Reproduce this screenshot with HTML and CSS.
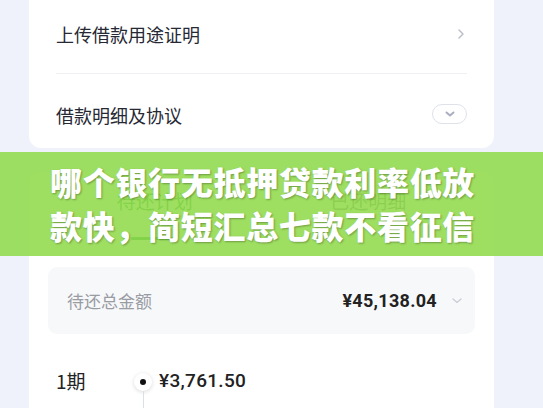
FILE: index.html
```html
<!DOCTYPE html>
<html lang="zh-CN">
<head>
  <meta charset="UTF-8">
  <meta name="viewport" content="width=device-width, initial-scale=1.0">
  <title>借款详情</title>
  <link rel="stylesheet" href="styles.css">
</head>
<body>
  <div class="page">
    <div class="card top-card">
      <div class="row">
        <span>上传借款用途证明</span>
        <svg class="arrow" width="8" height="12" viewBox="0 0 8 12"><path d="M2 2l4 4-4 4" fill="none" stroke="#b8bcc6" stroke-width="1.4" stroke-linecap="round" stroke-linejoin="round"/></svg>
      </div>
      <div class="row">
        <span>借款明细及协议</span>
        <span class="pill">
          <svg width="12" height="8" viewBox="0 0 12 8"><path d="M2.5 2.5l3.5 3 3.5-3" fill="none" stroke="#a9aec0" stroke-width="2" stroke-linecap="round" stroke-linejoin="round"/></svg>
        </span>
      </div>
    </div>

    <div class="card plan-card">
      <div class="tabs">
        <div class="tab active">待还计划</div>
        <div class="tab">已还明细</div>
      </div>
      <div class="total">
        <span class="total-label">待还总金额</span>
        <span class="total-value">¥45,138.04
          <svg width="12" height="8" viewBox="0 0 12 8"><path d="M2 2l4 3.5 4-3.5" fill="none" stroke="#c8ccd6" stroke-width="1.3" stroke-linecap="round"/></svg>
        </span>
      </div>
      <div class="period">
        <div class="period-name">1期</div>
        <div class="timeline"><span class="dot"></span><span class="line"></span></div>
        <div class="period-info">
          <div class="period-amount">¥3,761.50</div>
          <div class="period-sub">本金 ¥3,200.00 利息 ¥561.50</div>
        </div>
      </div>
      <div class="period-date">2024/02/20</div>
    </div>

    <div class="banner">
      <p>哪个银行无抵押贷款利率低放</p>
      <p>款快，简短汇总七款不看征信</p>
    </div>
  </div>
</body>
</html>
```

FILE: styles.css
```css
* {
  box-sizing: border-box;
}

body {
  margin: 0;
  background-color: #eff2fa;
  font-family: "Noto Sans CJK SC", "Noto Sans", sans-serif;
  color: #222;
  overflow: hidden;
}

.page {
  position: relative;
  padding-left: 29px;
  width: 494px;
}

.card {
  background-color: #fff;
  border-radius: 12px;
}

.top-card {
  height: 148px;
  border-top-left-radius: 0;
  border-top-right-radius: 0;
  padding: 0 27px;
}

.row {
  display: flex;
  justify-content: space-between;
  align-items: center;
  font-size: 18px;
  color: #262833;
}

.row:first-child {
  height: 74px;
  padding-bottom: 6px;
  border-bottom: 1px solid #eef0f4;
}

.row:last-child {
  height: 82px;
}

.arrow {
  margin-right: 2px;
}

.pill {
  display: flex;
  justify-content: center;
  align-items: center;
  width: 35px;
  height: 20px;
  border: 1px solid #dfe2ea;
  border-radius: 10px;
  margin-bottom: 2px;
}

.plan-card {
  margin-top: 24px;
  height: 260px;
  padding: 0 19px;
  overflow: hidden;
}

.tabs {
  display: flex;
  height: 72px;
}

.tab {
  position: relative;
  flex: 1;
  text-align: center;
  padding-top: 15px;
  font-size: 19px;
  color: #777;
}

.tab.active {
  color: #1f9a3e;
}

.tab.active::after {
  content: "";
  position: absolute;
  left: 50%;
  top: 65px;
  width: 46px;
  height: 3px;
  margin-left: -24px;
  border-radius: 2px;
  background-color: #1f9a3e;
}

.total {
  display: flex;
  justify-content: space-between;
  align-items: center;
  margin-top: 23px;
  height: 67px;
  padding: 0 12px 0 19px;
  border-radius: 9px;
  background-color: #f7f8fa;
}

.total-label {
  font-size: 17px;
  color: #9a9ca4;
}

.total-value {
  display: flex;
  align-items: center;
  gap: 14px;
  font-family: Roboto, "Noto Sans", sans-serif;
  font-size: 18px;
  font-weight: bold;
  letter-spacing: 0.3px;
  color: #222;
}

.period {
  display: flex;
  align-items: flex-start;
  margin-top: 34px;
  padding-left: 8px;
}

.period-name {
  width: 78px;
  font-size: 19px;
  line-height: 26px;
}

.timeline {
  position: relative;
  width: 22px;
  height: 60px;
  margin-top: 5px;
}

.dot {
  position: absolute;
  left: 0;
  top: 0;
  width: 18px;
  height: 18px;
  border-radius: 50%;
  background-color: #fff;
  box-shadow: 0 1px 4px rgba(0, 0, 0, 0.15);
}

.dot::after {
  content: "";
  position: absolute;
  left: 6px;
  top: 6px;
  width: 6px;
  height: 6px;
  border-radius: 50%;
  background-color: #111;
}

.line {
  position: absolute;
  left: 8.5px;
  top: 18px;
  width: 1px;
  height: 60px;
  background-color: #dcdfe6;
}

.period-info {
  margin-left: 3px;
}

.period-amount {
  font-family: Roboto, "Noto Sans", sans-serif;
  font-size: 19px;
  font-weight: 500;
  line-height: 26px;
  letter-spacing: 0.3px;
}

.period-sub {
  margin-top: 14px;
  font-size: 13px;
  color: #b0b3ba;
}

.period-date {
  margin-top: -22px;
  padding-left: 8px;
  font-size: 13px;
  color: #b0b3ba;
}

.banner {
  position: absolute;
  left: 0;
  top: 152px;
  width: 543px;
  height: 104px;
  padding: 7px 18px 0 0;
  background-color: rgba(145, 219, 75, 0.88);
  text-align: center;
}

.banner p {
  margin: 0;
  font-size: 32px;
  font-weight: 900;
  line-height: 44px;
  letter-spacing: 0.7px;
  color: #fff;
  text-shadow: 1px 1px 2px rgba(0, 0, 0, 0.3);
}
```
